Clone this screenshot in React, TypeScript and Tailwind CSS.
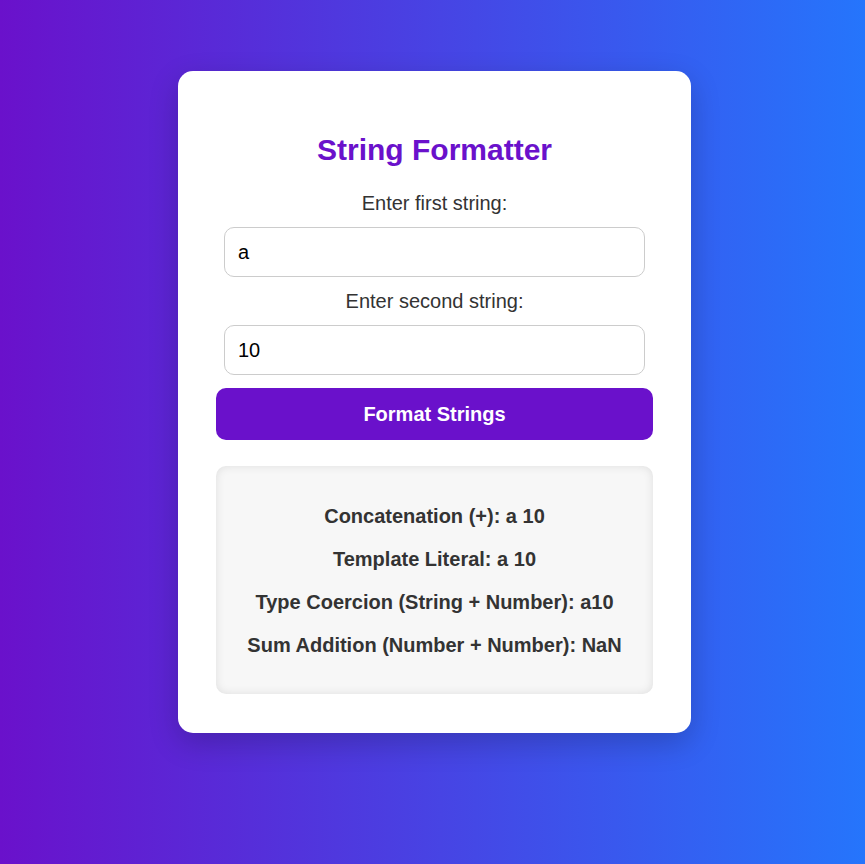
import { useState } from 'react';

export default function App() {
  const [first, setFirst] = useState('a');
  const [second, setSecond] = useState('10');
  const [result, setResult] = useState({ a: 'a', b: '10' });

  const handleFormat = () => setResult({ a: first, b: second });

  const num = Number(result.a) + Number(result.b);
  const coerced = result.a + Number(result.b);

  return (
    <div
      className="min-h-screen w-full bg-[linear-gradient(to_right,#6a11cb,#2575fc)] flex justify-center items-start pl-[4px]"
      style={{ fontFamily: '"Liberation Sans", Arial, sans-serif' }}
    >
      <div className="mt-[71px] w-[513px] bg-white rounded-[15px] px-[38px] pt-[38px] pb-[39px] shadow-[0_10px_30px_rgba(0,0,0,0.2)] flex flex-col items-center text-center">
        <h1 className="mt-[24px] text-[30px] leading-[34px] font-bold text-[#6a11cb]">String Formatter</h1>
        <label className="mt-[25px] text-[20px] leading-[23px] text-[#333]">Enter first string:</label>
        <input
          value={first}
          onChange={e => setFirst(e.target.value)}
          className="mt-[12px] w-[421px] h-[50px] border border-[#ccc] rounded-[10px] px-[13px] text-[20px] text-black outline-none"
        />
        <label className="mt-[13px] text-[20px] leading-[23px] text-[#333]">Enter second string:</label>
        <input
          value={second}
          onChange={e => setSecond(e.target.value)}
          className="mt-[12px] w-[421px] h-[50px] border border-[#ccc] rounded-[10px] px-[13px] text-[20px] text-black outline-none"
        />
        <button
          onClick={handleFormat}
          className="mt-[13px] w-full h-[52px] bg-[#6a11cb] text-white text-[20px] font-bold rounded-[10px]"
        >
          Format Strings
        </button>
        <div className="mt-[26px] w-full bg-[#f7f7f7] rounded-[10px] shadow-[inset_0_0_10px_rgba(0,0,0,0.1)] pt-[39px] pb-[37px] flex flex-col gap-[20px] text-[20px] leading-[23px] font-bold text-[#333]">
          <p>Concatenation (+): {result.a + ' ' + result.b}</p>
          <p>Template Literal: {`${result.a} ${result.b}`}</p>
          <p>Type Coercion (String + Number): {coerced}</p>
          <p>Sum Addition (Number + Number): {String(num)}</p>
        </div>
      </div>
    </div>
  );
}
